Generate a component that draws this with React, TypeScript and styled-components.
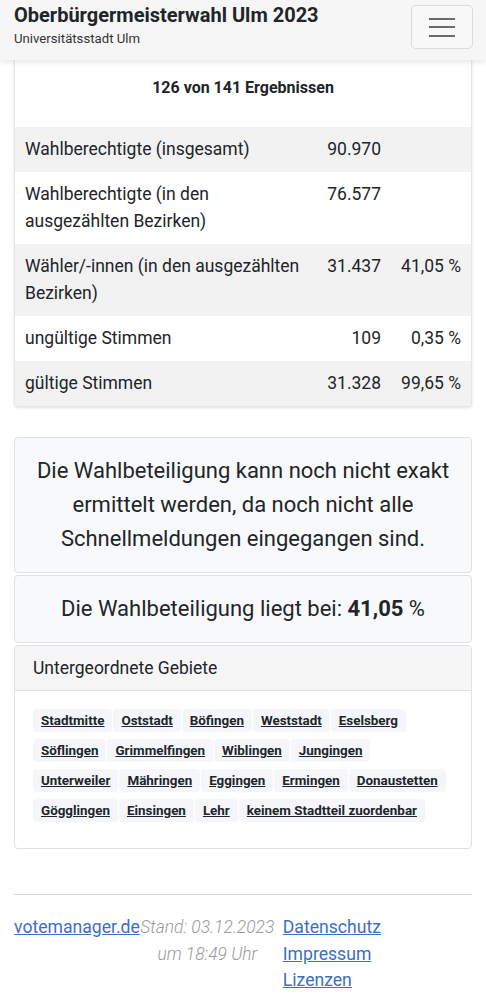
import React from 'react';
import styled, { createGlobalStyle } from 'styled-components';

type Row = {
    label: string;
    count: string;
    percent?: string;
};

const rows: Row[] = [
    { label: 'Wahlberechtigte (insgesamt)', count: '90.970' },
    { label: 'Wahlberechtigte (in den ausgezählten Bezirken)', count: '76.577' },
    { label: 'Wähler/-innen (in den ausgezählten Bezirken)', count: '31.437', percent: '41,05 %' },
    { label: 'ungültige Stimmen', count: '109', percent: '0,35 %' },
    { label: 'gültige Stimmen', count: '31.328', percent: '99,65 %' },
];

const areas = [
    'Stadtmitte', 'Oststadt', 'Böfingen', 'Weststadt', 'Eselsberg',
    'Söflingen', 'Grimmelfingen', 'Wiblingen', 'Jungingen',
    'Unterweiler', 'Mähringen', 'Eggingen', 'Ermingen', 'Donaustetten',
    'Gögglingen', 'Einsingen', 'Lehr', 'keinem Stadtteil zuordenbar',
];

const App: React.FC = () => {
    return (
        <>
            <GlobalStyle />
            <Header>
                <Brand>
                    <BrandTitle>Oberbürgermeisterwahl Ulm 2023</BrandTitle>
                    <BrandSub>Universitätsstadt Ulm</BrandSub>
                </Brand>
                <MenuButton aria-label="Menü">
                    <MenuBar />
                    <MenuBar />
                    <MenuBar />
                </MenuButton>
            </Header>

            <Main>
                <ResultCard>
                    <Caption>126 von 141 Ergebnissen</Caption>
                    <Table>
                        <tbody>
                            {rows.map((row, index) => (
                                <Tr key={row.label} striped={index % 2 === 0}>
                                    <Td>{row.label}</Td>
                                    <NumTd>{row.count}</NumTd>
                                    <NumTd>{row.percent ?? ''}</NumTd>
                                </Tr>
                            ))}
                        </tbody>
                    </Table>
                </ResultCard>

                <Notices>
                    <Notice>
                        Die Wahlbeteiligung kann noch nicht exakt ermittelt werden, da noch nicht alle Schnellmeldungen eingegangen sind.
                    </Notice>
                    <Notice>
                        Die Wahlbeteiligung liegt bei: <b>41,05</b> %
                    </Notice>

                    <AreaCard>
                        <AreaHeader>Untergeordnete Gebiete</AreaHeader>
                        <AreaBody>
                            {areas.map((area) => (
                                <Badge key={area} href="#">{area}</Badge>
                            ))}
                        </AreaBody>
                    </AreaCard>
                </Notices>

                <Footer>
                    <FooterLink href="#">votemanager.de</FooterLink>
                    <Stand>Stand: 03.12.2023 um 18:49 Uhr</Stand>
                    <LinkList>
                        <FooterLink href="#">Datenschutz</FooterLink>
                        <FooterLink href="#">Impressum</FooterLink>
                        <FooterLink href="#">Lizenzen</FooterLink>
                    </LinkList>
                </Footer>
            </Main>
        </>
    );
};

export default App;

const GlobalStyle = createGlobalStyle`
    body {
        margin: 0;
        background: #ffffff;
        color: #212529;
        font-family: Roboto, "Liberation Sans", sans-serif;
    }
    * { box-sizing: border-box; }
`;

const Header = styled.header`
    height: 60px;
    background: #f6f6f6;
    box-shadow: 0 2px 6px rgba(0, 0, 0, 0.1);
    display: flex;
    align-items: flex-start;
    justify-content: space-between;
    padding: 3px 13px 0 14px;
    position: relative;
    z-index: 2;
`;

const Brand = styled.div`
    display: flex;
    flex-direction: column;
`;

const BrandTitle = styled.div`
    font-size: 20px;
    font-weight: 700;
    line-height: 25px;
`;

const BrandSub = styled.div`
    font-size: 13.2px;
    line-height: 18px;
    margin-top: 2px;
    color: #333;
`;

const MenuButton = styled.button`
    width: 62px;
    height: 44px;
    margin-top: 2px;
    border: 1px solid #dcdcdc;
    border-radius: 5px;
    background: #f8f8f8;
    display: flex;
    flex-direction: column;
    align-items: center;
    justify-content: center;
    gap: 6.5px;
    padding: 0;
`;

const MenuBar = styled.span`
    display: block;
    width: 26px;
    height: 2px;
    background: #6a6a6a;
`;

const Main = styled.main`
    padding: 0 14px 20px;
`;

const ResultCard = styled.section`
    background: #fff;
    border: 1px solid #e6e6e6;
    border-top: none;
    border-radius: 0 0 4px 4px;
    box-shadow: 0 1px 3px rgba(0, 0, 0, 0.12);
    overflow: hidden;
`;

const Caption = styled.div`
    font-size: 16px;
    font-weight: 700;
    text-align: center;
    line-height: 20px;
    padding: 18px 0 29px;
`;

const Table = styled.table`
    width: 100%;
    border-collapse: collapse;
    font-size: 17.5px;
    line-height: 27px;
`;

const Tr = styled.tr<{ striped: boolean }>`
    background: ${(p) => (p.striped ? '#f2f2f2' : '#ffffff')};
    & + & td {
        border-top: 1px solid #e2e2e2;
    }
`;

const Td = styled.td`
    padding: 9px 10px;
    vertical-align: top;
`;

const NumTd = styled(Td)`
    text-align: right;
    white-space: nowrap;
`;

const Notices = styled.div`
    margin-top: 30px;
    display: flex;
    flex-direction: column;
    gap: 2px;
`;

const Notice = styled.div`
    background: #f8f9fa;
    border: 1px solid #dfe1e4;
    border-radius: 4px;
    padding: 16px 14px;
    font-size: 22px;
    line-height: 34px;
    text-align: center;

    b {
        font-weight: 700;
    }
`;

const AreaCard = styled.div`
    border: 1px solid #dfe1e4;
    border-radius: 4px;
    overflow: hidden;
`;

const AreaHeader = styled.div`
    background: #f6f6f6;
    border-bottom: 1px solid #e0e0e0;
    height: 45px;
    padding: 0 18px;
    display: flex;
    align-items: center;
    font-size: 17.5px;
`;

const AreaBody = styled.div`
    display: flex;
    flex-wrap: wrap;
    row-gap: 7px;
    column-gap: 1px;
    padding: 18px 22px 26px 18px;
`;

const Badge = styled.a`
    background: #f4f6f9;
    border-radius: 4px;
    padding: 2px 8px;
    font-size: 13.4px;
    line-height: 19px;
    font-weight: 700;
    color: #212529;
    text-decoration: underline;
`;

const Footer = styled.footer`
    margin-top: 45px;
    border-top: 1px solid #d8d8d8;
    padding-top: 19px;
    display: flex;
    align-items: flex-start;
    font-size: 17.6px;
    line-height: 26.5px;
`;

const FooterLink = styled.a`
    color: #3a6fc4;
    text-decoration: underline;
`;

const Stand = styled.div`
    width: 135px;
    margin-right: 8px;
    font-size: 17.4px;
    font-style: italic;
    font-weight: 300;
    color: #9a9a9a;
    text-align: center;
`;

const LinkList = styled.div`
    display: flex;
    flex-direction: column;
`;
